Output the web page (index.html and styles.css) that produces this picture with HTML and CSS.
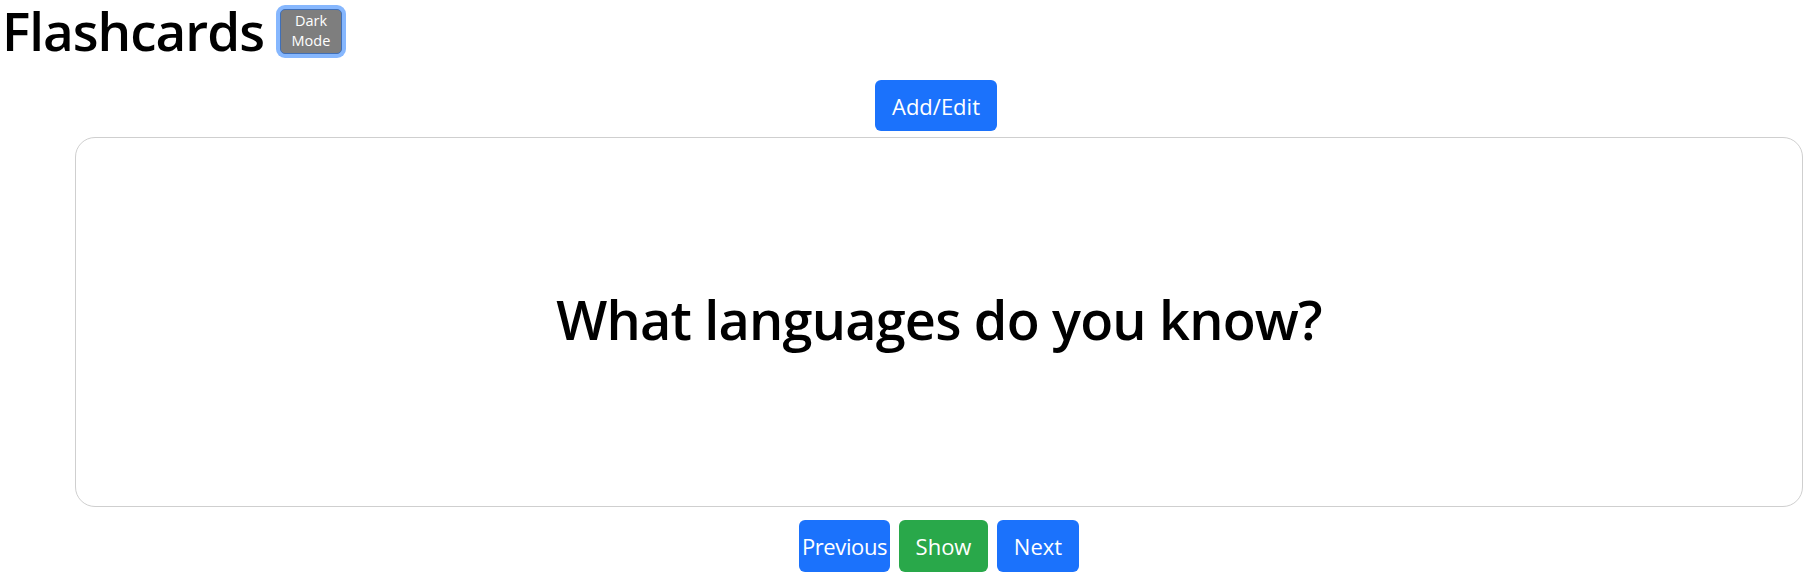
FILE: index.html
```html
<!DOCTYPE html>
<html lang="en">
<head>
<meta charset="utf-8">
<title>Flashcards</title>
<link rel="stylesheet" href="styles.css">
</head>
<body>
<header class="top">
  <h1 class="title">Flashcards</h1>
  <button class="btn-dark-mode">Dark<br>Mode</button>
</header>
<main class="deck">
  <div class="toolbar">
    <button class="btn btn-primary btn-add">Add/Edit</button>
  </div>
  <section class="card">
    <h2 class="question">What languages do you know?</h2>
  </section>
  <nav class="controls">
    <button class="btn btn-primary btn-prev">Previous</button>
    <button class="btn btn-success btn-show">Show</button>
    <button class="btn btn-primary btn-next">Next</button>
  </nav>
</main>
</body>
</html>
```

FILE: styles.css
```css
* { box-sizing: border-box; }

body {
  margin: 0;
  font-family: "Open Sans", "Noto Sans", sans-serif;
  color: #000;
  background: #fff;
}

.top {
  display: flex;
  align-items: center;
  height: 62px;
  padding-left: 2px;
  gap: 14px;
}

.title {
  margin: 0;
  font-size: 53px;
  font-weight: 600;
  line-height: 1.3;
  letter-spacing: -1px;
  padding-right: 2px;
}

.btn-dark-mode {
  width: 62px;
  height: 45px;
  padding: 0;
  font-family: inherit;
  font-size: 14.5px;
  line-height: 20px;
  color: #fff;
  background: #7e7e7e;
  border: 1px solid #3f6fb8;
  border-radius: 5px;
  box-shadow: 0 0 0 4px #86b7fe;
}

.deck {
  display: flex;
  flex-direction: column;
  align-items: center;
  margin: 0 13px 0 75px;
}

.toolbar {
  margin-top: 18px;
  display: flex;
  justify-content: center;
}

.btn {
  height: 52px;
  padding: 0;
  font-family: inherit;
  font-size: 22px;
  line-height: 1;
  color: #fff;
  border: none;
  border-radius: 6px;
  cursor: pointer;
}

.btn-primary { background: #1b72fc; }
.btn-success { background: #29a84a; }

.btn-add { height: 51px; width: 122px; margin-left: -6px; }
.btn-prev { width: 91px; letter-spacing: -0.4px; }
.btn-show { width: 89px; }
.btn-next { width: 82px; }

.card {
  margin-top: 6px;
  width: 100%;
  height: 370px;
  border: 1px solid #cfcfcf;
  border-radius: 20px;
  display: flex;
  align-items: center;
  justify-content: center;
}

.question {
  margin: 0 0 6px;
  font-size: 54px;
  font-weight: 600;
  letter-spacing: -0.8px;
}

.controls {
  margin-top: 13px;
  display: flex;
  gap: 9px;
}
```
